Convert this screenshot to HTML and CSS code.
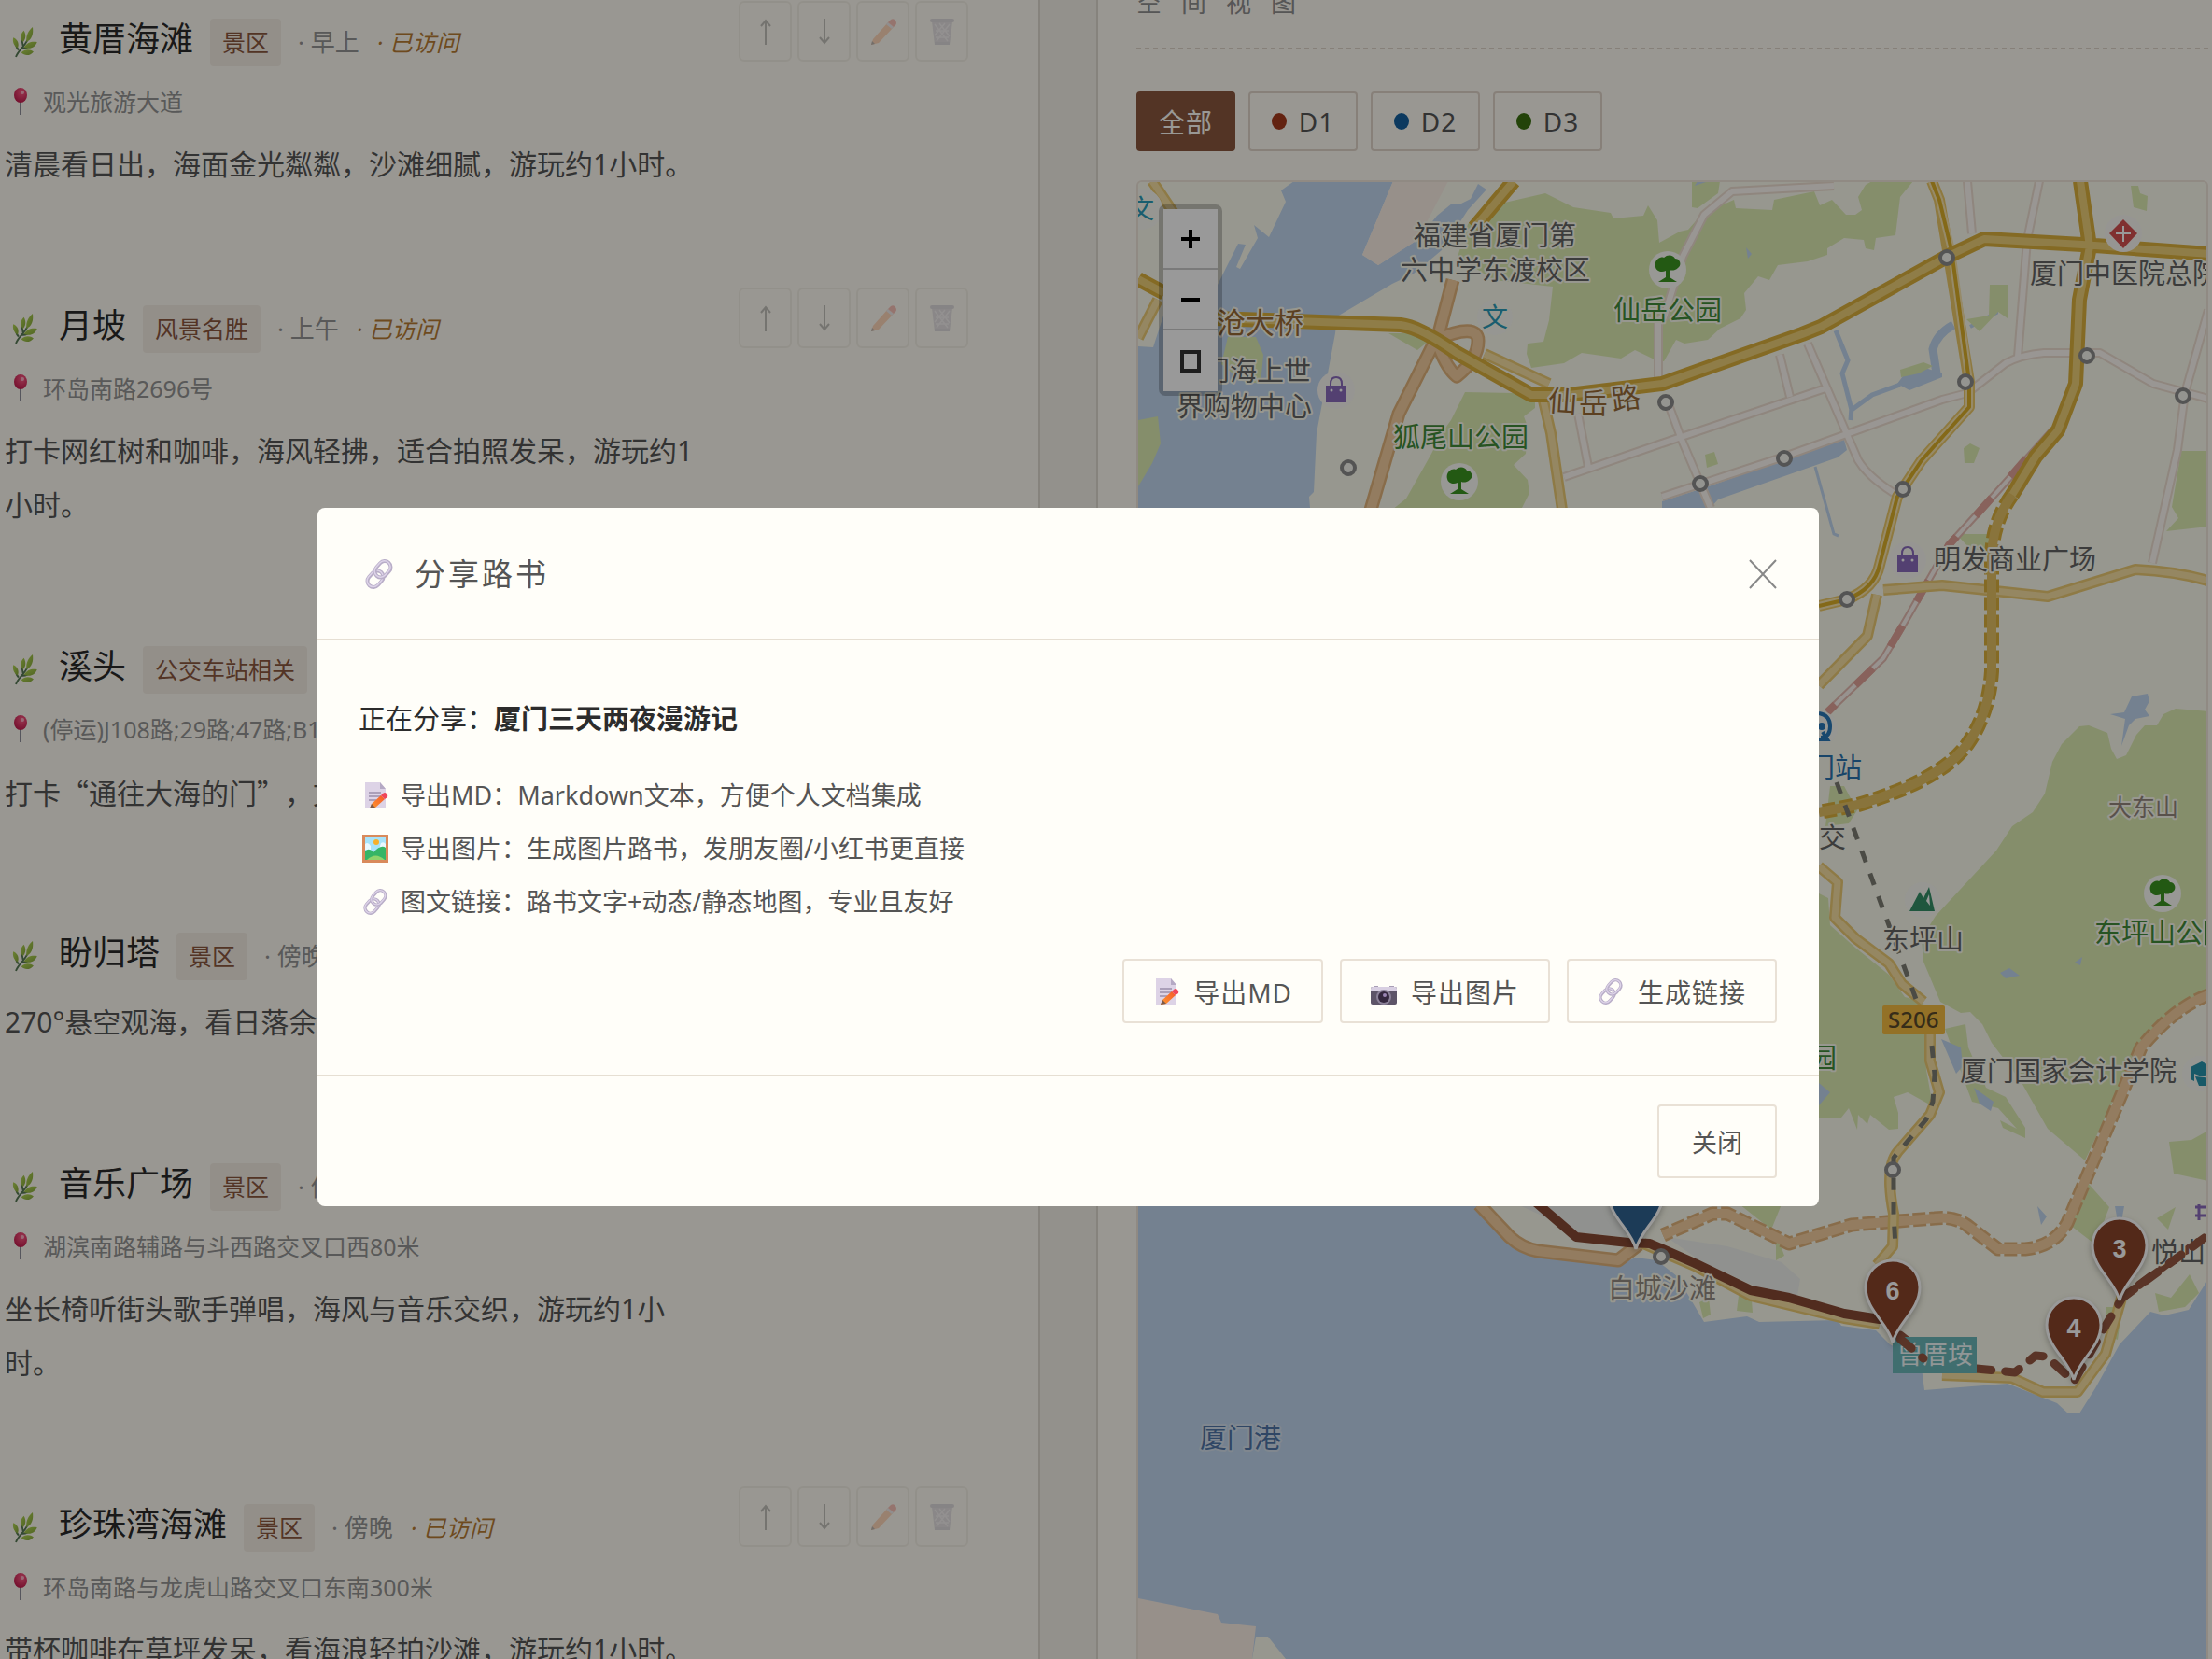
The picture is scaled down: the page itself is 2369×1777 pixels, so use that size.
FILE: index.html
```html
<!DOCTYPE html>
<html lang="zh-CN">
<head>
<meta charset="utf-8">
<title>厦门三天两夜漫游记</title>
<link rel="stylesheet" href="styles.css">
</head>
<body>
<svg class="sprite" aria-hidden="true">
  <defs>
    <linearGradient id="g-pencil" x1="0" y1="1" x2="1" y2="0"><stop offset="0" stop-color="#ff9a2e"/><stop offset="1" stop-color="#f4582c"/></linearGradient>
    <linearGradient id="g-leaf" x1="0" y1="0" x2="1" y2="1"><stop offset="0" stop-color="#b5d955"/><stop offset="1" stop-color="#86a83c"/></linearGradient>
    <radialGradient id="g-ball" cx=".6" cy=".3" r=".7"><stop offset="0" stop-color="#ff5c86"/><stop offset="1" stop-color="#c41c4e"/></radialGradient>
  </defs>
  <symbol id="leaf" viewBox="0 0 28 36">
    <path d="M4 35C6 28 13 24 17 16M7 27Q4 24 4 19M12 22Q11 18 11 14M10 25Q16 26 22 21" fill="none" stroke="#587a55" stroke-width="2"/>
    <g fill="url(#g-leaf)"><path d="M16 18C15 11 18 5 23 1C24 9 22 15 16 18Z"/><path d="M12 18C8 14 9 9 13 5C16 10 15 15 12 18Z"/><path d="M6 25C1 22 0 17 1 13C6 15 8 20 6 25Z"/><path d="M13 24C17 18 22 17 28 18C26 24 20 27 13 24Z"/><path d="M10 30C14 26 20 26 24 29C20 34 14 34 10 30Z"/></g>
  </symbol>
  <symbol id="pushpin" viewBox="0 0 16 30"><path d="M8 13V29" stroke="#8f8f9c" stroke-width="2"/><ellipse cx="8" cy="8" rx="7" ry="8" fill="url(#g-ball)"/><ellipse cx="10" cy="5" rx="2" ry="2" fill="#ffb0c4"/></symbol>
  <symbol id="link" viewBox="0 0 32 32">
    <g transform="rotate(-48 16 16)" fill="none"><rect x="0" y="10" width="19" height="13" rx="6.5" stroke="#b9aec8" stroke-width="4"/><rect x="0" y="9.5" width="19" height="13" rx="6.5" stroke="#ddd3e8" stroke-width="1.5"/><rect x="13" y="9" width="19" height="13" rx="6.5" stroke="#b9aec8" stroke-width="4"/><rect x="13" y="8.5" width="19" height="13" rx="6.5" stroke="#ddd3e8" stroke-width="1.5"/></g>
  </symbol>
  <symbol id="memo" viewBox="0 0 28 30"><path d="M3 1H19L25 8V29H3Z" fill="#ddd3e6"/><path d="M19 1V8H25Z" fill="#b5a9c4"/><path d="M7 12H20M7 16H20M7 20H15" stroke="#9b8fab" stroke-width="1.5"/><path d="M10 24L20 15L24 19L14 28L8 29Z" fill="url(#g-pencil)"/><path d="M20 15L22 13Q24 11 26 13T27 17L24 19Z" fill="#f0465a"/><path d="M8 29L10 24L14 28Z" fill="#7b5a4a"/></symbol>
  <symbol id="picture" viewBox="0 0 28 30"><path d="M0 0H28V30H0Z" fill="#d98a5b"/><path d="M3 3H25V27H3Z" fill="#a7e3fa"/><circle cx="15" cy="8" r="3" fill="#f6b02c"/><path d="M3 10Q6 7 9 12L9 16H3ZM20 9Q23 7 25 10V15H18Z" fill="#e9f8ff"/><path d="M3 18Q7 13 12 19Q20 10 25 14V27H3Z" fill="#35b566"/><path d="M5 27Q14 18 24 27Z" fill="#8ed36b"/></symbol>
  <symbol id="camera" viewBox="0 0 28 30"><path d="M3 9H8V12H3ZM20 9H25V12H20Z" fill="#a89db5"/><rect y="10" width="28" height="19" rx="2" fill="#5d5468"/><path d="M0 14V12Q0 10 2 10H26Q28 10 28 12V14Z" fill="#d8cfe2"/><ellipse cx="14" cy="21" rx="8" ry="8" fill="#8c8299"/><ellipse cx="14" cy="21" rx="6" ry="6" fill="#35283f"/><circle cx="15" cy="19" r="2" fill="#9b86b4"/></symbol>
  <symbol id="pencil" viewBox="0 0 28 30"><path d="M3 23L19 5L25 10L9 27L1 29Z" fill="#ff9352"/><path d="M17 7L19 5L25 10L23 12Z" fill="#d9d3e4"/><path d="M19 5L22 2Q25 0 27 3T27 8L25 10Z" fill="#f0584e"/><path d="M1 29L2 25L5 28Z" fill="#4a3a3a"/></symbol>
  <symbol id="bin" viewBox="0 0 28 30"><path d="M3 4H25L22 29H6Z" fill="#b8b3c6"/><path d="M6 7L20 25M11 6L22 20M22 7L8 25M17 6L6 19M7 14H21M7 21H21" stroke="#e3dfee" stroke-width="1.5"/><rect x="1" y="1" width="26" height="4" rx="2" fill="#a8a3b8"/><path d="M6 26H22V29H6Z" fill="#a8a3b8"/></symbol>
  <symbol id="up" viewBox="0 0 28 30"><path d="M14 29V3M9 9L14 3L19 9" fill="none" stroke="#555" stroke-width="2"/></symbol>
  <symbol id="down" viewBox="0 0 28 30"><path d="M14 1V27M9 21L14 27L19 21" fill="none" stroke="#555" stroke-width="2"/></symbol>
</svg>

<div class="page">
  <main class="plan">
    <article class="stop">
      <div class="stop-main">
        <header class="stop-head"><svg class="leaf"><use href="#leaf"/></svg><h3>黄厝海滩</h3><span class="tag">景区</span><span class="time">· 早上</span><em class="visited">· 已访问</em></header>
        <p class="address"><svg><use href="#pushpin"/></svg>观光旅游大道</p>
        <p class="note">清晨看日出，海面金光粼粼，沙滩细腻，游玩约1小时。</p>
      </div>
      <div class="actions"><button aria-label="上移"><svg><use href="#up"/></svg></button><button aria-label="下移"><svg><use href="#down"/></svg></button><button aria-label="编辑"><svg><use href="#pencil"/></svg></button><button aria-label="删除"><svg><use href="#bin"/></svg></button></div>
    </article>
    <article class="stop">
      <div class="stop-main">
        <header class="stop-head"><svg class="leaf"><use href="#leaf"/></svg><h3>月坡</h3><span class="tag">风景名胜</span><span class="time">· 上午</span><em class="visited">· 已访问</em></header>
        <p class="address"><svg><use href="#pushpin"/></svg>环岛南路2696号</p>
        <p class="note">打卡网红树和咖啡，海风轻拂，适合拍照发呆，游玩约1小时。</p>
      </div>
      <div class="actions"><button aria-label="上移"><svg><use href="#up"/></svg></button><button aria-label="下移"><svg><use href="#down"/></svg></button><button aria-label="编辑"><svg><use href="#pencil"/></svg></button><button aria-label="删除"><svg><use href="#bin"/></svg></button></div>
    </article>
    <article class="stop">
      <div class="stop-main">
        <header class="stop-head"><svg class="leaf"><use href="#leaf"/></svg><h3>溪头</h3><span class="tag">公交车站相关</span></header>
        <p class="address"><svg><use href="#pushpin"/></svg>(停运)J108路;29路;47路;B1</p>
        <p class="note quoted">打卡“通往大海的门”，文</p>
      </div>
    </article>
    <article class="stop">
      <div class="stop-main">
        <header class="stop-head"><svg class="leaf"><use href="#leaf"/></svg><h3>盼归塔</h3><span class="tag">景区</span><span class="time">· 傍晚</span></header>
        <p class="note">270°悬空观海，看日落余</p>
      </div>
    </article>
    <article class="stop">
      <div class="stop-main">
        <header class="stop-head"><svg class="leaf"><use href="#leaf"/></svg><h3>音乐广场</h3><span class="tag">景区</span><span class="time">· 傍晚</span></header>
        <p class="address"><svg><use href="#pushpin"/></svg>湖滨南路辅路与斗西路交叉口西80米</p>
        <p class="note">坐长椅听街头歌手弹唱，海风与音乐交织，游玩约1小时。</p>
      </div>
    </article>
    <article class="stop">
      <div class="stop-main">
        <header class="stop-head"><svg class="leaf"><use href="#leaf"/></svg><h3>珍珠湾海滩</h3><span class="tag">景区</span><span class="time">· 傍晚</span><em class="visited">· 已访问</em></header>
        <p class="address"><svg><use href="#pushpin"/></svg>环岛南路与龙虎山路交叉口东南300米</p>
        <p class="note">带杯咖啡在草坪发呆，看海浪轻拍沙滩，游玩约1小时。</p>
      </div>
      <div class="actions"><button aria-label="上移"><svg><use href="#up"/></svg></button><button aria-label="下移"><svg><use href="#down"/></svg></button><button aria-label="编辑"><svg><use href="#pencil"/></svg></button><button aria-label="删除"><svg><use href="#bin"/></svg></button></div>
    </article>
  </main>
  <div class="gutter"></div>
  <aside class="space">
    <h2>空间视图</h2>
    <div class="rule"></div>
    <div class="days">
      <button class="all">全部</button>
      <button><i class="dot d1"></i>D1</button>
      <button><i class="dot d2"></i>D2</button>
      <button><i class="dot d3"></i>D3</button>
    </div>
    <div class="map">
      <svg class="canvas" viewBox="1219 195 1146 1582" preserveAspectRatio="xMinYMin slice">
        <defs>
          <g id="tree"><circle r="20" fill="#fdfdf8"/><path d="M-13-3C-15-9-9-15-4-13C0-17 6-16 8-12C14-12 15-4 11-2C8 1 4 1 2 0V8L10 13H-10L-2 8V1C-6 3-12 2-13-3Z" fill="#3b9420"/></g>
          <g id="bag"><circle r="20" fill="#fbf9f4"/><path d="M-11-5H11V13H-11Z" fill="#8b6bbd"/><path d="M-6-3V-7Q-6-14 0-14T6-7V-3" fill="none" stroke="#8b6bbd" stroke-width="2"/><circle cx="-5" cy="0" r="1.5" fill="#fff"/><circle cx="5" cy="0" r="1.5" fill="#fff"/></g>
          <path id="pin" d="M0 0C-5-21-29-35-29-59A29 29 0 0 1 29-59C29-35 5-21 0 0Z" stroke="#fff" stroke-width="3"/>
          <g id="stn"><circle r="7" fill="#f7f7f0" stroke="#8c8c8c" stroke-width="4"/></g>
        </defs>
        <path d="M1219 195H2365V1777H1219Z" fill="#fcfcee"/>

        <g class="water">
          <path d="M1386 194L1372 204L1377 216L1359 254L1343 241L1347 255L1328 288L1324 286L1334 262L1326 261L1303 307L1280 325L1247 335L1235 372L1219 371V1300H1590L1403 544L1402 532L1407 527L1410 464L1430 357L1432 339L1464 320L1491 304L1514 293L1544 268L1572 225L1592 203L1583 197L1575 213L1565 218L1555 218L1539 231L1518 257L1476 284L1459 273L1492 194Z"/>
          <path d="M1219 1290H1580L1606 1323L1640 1340L1737 1353L1752 1347L1774 1350L1796 1367L1825 1416L1871 1410L1884 1416L1968 1414L1972 1420L2009 1425L2024 1440L2057 1457L2061 1489L2150 1482L2188 1497L2203 1503L2215 1514H2227L2244 1487L2270 1440L2303 1405L2318 1409L2344 1403L2365 1370V1777H1219Z"/>
          <path d="M1780 546V537L1830 521L1920 489L1975 471L1978 482L1968 490L1840 535L1830 546Z"/>
          <path d="M2032 411L2043 396L2065 395L2080 400V404L2045 418Z"/>
          <path d="M2260 765L2275 763L2283 746L2300 743L2302 751L2297 760L2302 767L2287 770L2280 777L2272 799L2276 770Z"/>
        </g>
        <g fill="none" stroke="#c1d7f0"><path d="M2074 400L2070 374Q2074 358 2092 348" stroke-width="9"/><path d="M1966 354L1979 386L1973 400L1983 439L2005 423L2035 412M1983 436L1982 450" stroke-width="5"/><path d="M1944 500L1964 572L1969 574" stroke-width="3"/><path d="M2110 350L2138 335V312" stroke-width="4"/></g>
        <path d="M1492 194H1551L1518 257L1476 284L1459 273Z" fill="#fcf0e7"/>
        <path d="M1219 1712L1304 1729L1308 1738L1345 1742L1341 1777H1219Z" fill="#fcf0e7"/>
        <path d="M1345 1753H1358L1377 1777H1341Z" fill="#fcfcee"/>
        <path d="M1625 1290H1760L1740 1325L1690 1320ZM1785 1325L1850 1335L1908 1352L1928 1370L1925 1388L1880 1378L1820 1350Z" fill="#f0f2ee"/>

        <g class="park">
          <path d="M1594 221L1655 207L1685 222L1725 228L1728 234L1760 231L1765 220L1775 236L1777 260L1799 248L1808 246L1823 229L1857 214L1859 223L1898 225L1900 214L1943 205L1949 220L1962 214L1977 230H1987L1994 225L1990 211L1998 198L2005 194H2049L2035 211L2030 252L2009 255L2007 268L1998 266L1996 257L1975 255L1957 266V273L1936 280L1904 284L1895 300L1883 296L1868 314L1870 332L1864 341L1842 352L1829 364L1804 368L1795 364L1782 387L1774 386L1751 375L1736 384L1694 378L1675 389L1640 394L1635 379L1636 368L1653 366L1659 343L1663 307L1600 300L1561 275L1572 240Z"/>
          <path d="M1812 194H1842L1840 207L1818 223L1812 222Z"/>
          <path d="M1569 420L1621 421L1644 430V437L1632 446L1636 457L1634 486L1621 498L1636 514L1638 528L1629 546H1491L1506 534L1533 486L1544 464L1554 450Z"/>
          <path d="M1315 361H1345L1353 380L1350 411L1330 408L1308 390ZM1219 450L1240 446L1243 475L1234 496L1219 521ZM1487 357H1540L1518 375ZM2282 199H2290L2292 207L2300 210L2299 226L2285 222Z"/>
          <path d="M2336 483H2365V564L2320 569L2333 555L2326 543ZM1826 487L1836 484L1840 497L1828 501ZM2131 305H2150V341L2140 334L2120 355L2106 342L2130 338ZM2103 480L2110 475L2120 480L2114 496H2104ZM2035 396L2060 388L2070 392L2055 400L2036 404ZM2095 572H2130V590L2110 588Z"/>
          <path d="M2365 762L2330 759L2317 765L2310 777H2297L2288 787L2277 809L2267 813L2261 802L2257 785L2237 777L2227 778L2208 797L2198 816L2190 850L2177 870L2155 885L2138 911L2073 981L2058 1005L2060 1030L2078 1073L2100 1085L2110 1084L2123 1097L2133 1117L2163 1156L2193 1209L2233 1243L2260 1185L2293 1122L2333 1078L2365 1061Z"/>
          <path d="M1948 957L1958 962L1960 991L1987 1015L2023 1044L2040 1068L2060 1073L2063 1146L2070 1185L2043 1170L2028 1175L2033 1192V1209L2023 1210L2003 1194L2000 1204L1990 1194L1989 1210L1980 1187L1972 1197H1940V957ZM1960 842L1975 842L1989 868L1980 882L1955 885Z"/>
          <path d="M2083 1102L2105 1097L2108 1122L2127 1165L2148 1175L2169 1208V1219L2145 1208L2142 1200L2160 1209L2140 1187L2112 1180Z"/>
          <path d="M2323 1223L2347 1221L2365 1211V1265L2328 1257ZM2236 1267L2259 1293L2244 1333L2218 1313ZM1863 1290H1908L1897 1317ZM1863 1380H1875L1877 1406L1860 1404ZM1820 1395L1830 1390L1832 1408L1824 1412ZM1902 1320L1911 1345L1902 1350ZM2310 1305L2330 1293L2322 1317ZM2308 1385L2325 1390L2345 1365L2355 1385L2340 1400L2312 1405ZM2255 1400H2273L2268 1435L2255 1430Z"/>
        </g>
        <g class="water"><path d="M2079 1113L2100 1122L2102 1142L2095 1150ZM2114 1165L2135 1180L2132 1190L2120 1182ZM2142 1042L2152 1037L2163 1045L2148 1048ZM2222 1031L2230 1025L2228 1034ZM1948 1160L1960 1170L1948 1184ZM1830 194H1818L1815 199ZM1870 265L1876 272L1872 277ZM2182 1292L2192 1303L2186 1312ZM2265 1292H2275L2270 1320Z"/></g>

        <!-- side streets: casing, then surface -->
        <g fill="none" stroke-linejoin="round">
          <g stroke="#efdfd2" stroke-width="10"><path d="M1964 199L1855 205L1825 230L1802 275L1782 340L1776 343V410M1788 436L1801 471L1832 544M1780 475L1955 416M1906 380L1917 425M1936 368L1990 493Q2000 510 2028 528M1690 443L1701 500M1675 511L1800 468M1780 532L1911 489L2080 428L2107 421L2148 389Q2165 380 2189 378H2249L2306 411L2365 427M2107 194L2112 250M2184 194L2171 257L2161 382M2365 332L2340 421L2332 482L2305 603"/></g>
          <g stroke="#fffaf5" stroke-width="6"><path d="M1964 199L1855 205L1825 230L1802 275L1782 340L1776 343V410M1788 436L1801 471L1832 544M1780 475L1955 416M1906 380L1917 425M1936 368L1990 493Q2000 510 2028 528M1690 443L1701 500M1675 511L1800 468M1780 532L1911 489L2080 428L2107 421L2148 389Q2165 380 2189 378H2249L2306 411L2365 427M2107 194L2112 250M2184 194L2171 257L2161 382M2365 332L2340 421L2332 482L2305 603"/></g>
          <path d="M2198 461L2127 540L2087 584L2043 661L2017 705L1957 763" stroke="#e6bdb2" stroke-width="8"/>
          <path d="M2198 461L2127 540L2087 584L2043 661L2017 705L1957 763" stroke="#fcf4ee" stroke-width="4"/>
          <path d="M2170 491L2127 540L2087 584L2043 661L2017 705L1957 763" stroke="#e3a499" stroke-width="8" stroke-dasharray="26 30"/>

          <!-- orange highways -->
          <g stroke="#e3b57c" stroke-width="15"><path d="M1556 300L1541 357L1498 443L1468 546M1537 364Q1583 345 1583 365T1560 403Q1550 395 1541 372"/><path d="M1584 1290L1617 1325Q1630 1337 1647 1340L1733 1350L1755 1333"/><path d="M2365 1066Q2330 1078 2293 1122L2273 1170L2214 1310Q2200 1335 2169 1338H2140L2110 1315Q2095 1302 2072 1305L1983 1312L1916 1332L1850 1300H1834L1781 1323" stroke-dasharray="14 4"/></g>
          <g stroke="#f5cfa0" stroke-width="10"><path d="M1556 300L1541 357L1498 443L1468 546M1537 364Q1583 345 1583 365T1560 403Q1550 395 1541 372"/><path d="M1584 1290L1617 1325Q1630 1337 1647 1340L1733 1350L1755 1333"/><path d="M2365 1066Q2330 1078 2293 1122L2273 1170L2214 1310Q2200 1335 2169 1338H2140L2110 1315Q2095 1302 2072 1305L1983 1312L1916 1332L1850 1300H1834L1781 1323"/></g>

          <!-- pale yellow roads -->
          <g stroke="#edcb74" stroke-width="12"><path d="M1590 379L1659 411M1652 425L1661 464L1673 546M1219 362L1240 321M1234 194L1257 228M2017 632L2080 627L2193 639L2287 610Q2330 612 2365 622M2010 637L2000 681L1948 734M1948 928L1968 945L1965 983L1987 1005L2023 1032L2037 1054L2060 1073M2067 1107V1136L2077 1170L2067 1194L2033 1233Q2018 1250 2028 1300L2027 1335L2010 1355M1760 1332L1815 1356L1875 1388L1975 1412L2013 1418M2080 1473L2155 1476L2188 1491H2225L2255 1450L2275 1380"/></g>
          <g stroke="#f8e1a4" stroke-width="7"><path d="M1590 379L1659 411M1652 425L1661 464L1673 546M1219 362L1240 321M1234 194L1257 228M2017 632L2080 627L2193 639L2287 610Q2330 612 2365 622M2010 637L2000 681L1948 734M1948 928L1968 945L1965 983L1987 1005L2023 1032L2037 1054L2060 1073M2067 1107V1136L2077 1170L2067 1194L2033 1233Q2018 1250 2028 1300L2027 1335L2010 1355M1760 1332L1815 1356L1875 1388L1975 1412L2013 1418M2080 1473L2155 1476L2188 1491H2225L2255 1450L2275 1380"/></g>

          <!-- main roads -->
          <path d="M2069 194L2077 214L2086 268L2109 409V436L2058 493L2032 532L2013 605Q2008 630 1978 642L1948 649" stroke="#edca6a" stroke-width="12"/>
          <path d="M2069 194L2077 214L2090 268L2109 409V436L2058 493L2032 532L2013 605Q2008 630 1978 642L1948 649" stroke="#fae7b0" stroke-width="8"/>
          <path d="M2069 194L2077 214L2090 268L2109 409V436L2058 493L2032 532L2013 605Q2008 630 1978 642L1948 649" stroke="#dcb028" stroke-width="4"/>
          <g stroke="#dcb13c" stroke-width="16"><path d="M1300 341L1500 348Q1520 350 1560 378L1640 423H1680L1780 411L1930 358L1950 350L2085 275L2125 256L2230 262L2365 272M1621 194L1579 244M1219 299L1247 314M2228 194L2238 264L2227 321L2223 411L2204 461L2180 489L2155 530"/><path d="M2155 530Q2133 560 2133 600V719Q2130 765 2107 797Q2080 835 1990 862L1948 870" stroke-dasharray="14 5"/></g>
          <g stroke="#efd078" stroke-width="8"><path d="M1300 341L1500 348Q1520 350 1560 378L1640 423H1680L1780 411L1930 358L1950 350L2085 275L2125 256L2230 262L2365 272M1621 194L1579 244M1219 299L1247 314M2228 194L2238 264L2227 321L2223 411L2204 461L2180 489L2155 530"/></g>
          <path d="M2155 530Q2133 560 2133 600V719Q2130 765 2107 797Q2080 835 1990 862L1948 870" stroke="#e5c264" stroke-width="10"/>
          <path d="M1967 838L2053 1073M2069 1120L2072 1151L2070 1180L2063 1199L2028 1240V1300L2030 1335" stroke="#7d7d74" stroke-width="5" stroke-dasharray="13 13"/>

          <!-- planned route -->
          <path d="M1645 1288L1688 1325L1744 1331L1767 1332L1815 1353L1875 1382L1916 1390L1975 1407L2013 1413" stroke="#884a34" stroke-width="10" stroke-linecap="round"/>
          <path d="M2035 1430L2076 1462L2158 1470L2180 1452L2192 1453L2221 1480L2255 1420L2273 1390L2326 1350L2365 1323" stroke="#965842" stroke-width="9" stroke-linecap="round" stroke-dasharray="16 15"/>
        </g>

        <use href="#stn" x="2085" y="276"/><use href="#stn" x="2105" y="409"/><use href="#stn" x="2235" y="381"/><use href="#stn" x="2338" y="424"/><use href="#stn" x="1911" y="491"/><use href="#stn" x="1821" y="518"/><use href="#stn" x="2038" y="524"/><use href="#stn" x="1784" y="431"/><use href="#stn" x="1444" y="501"/><use href="#stn" x="1978" y="642"/><use href="#stn" x="2027" y="1253"/><use href="#stn" x="1779" y="1346"/>

        <use href="#tree" x="1786" y="289"/><use href="#tree" x="1563" y="516"/><use href="#tree" x="2316" y="957"/><use href="#bag" x="1431" y="418"/><use href="#bag" x="2043" y="600"/>
        <circle cx="2274" cy="250" r="20" fill="#fbf9f4"/><path d="M2274 235L2289 250L2274 266L2259 250Z" fill="#d65050"/><path d="M2274 242V259M2266 250H2282" stroke="#fff" stroke-width="2"/>
        <circle cx="2059" cy="964" r="19" fill="#fbfbf4"/><path d="M2045 976L2056 955L2060 962L2066 950L2072 976Z" fill="#359068"/><path d="M2063 965L2066 958L2067 970Z" fill="#fff"/>
        <circle cx="2356" cy="1150" r="19" fill="#fbfbf4"/><path d="M2346 1143L2358 1137L2370 1143V1150L2358 1153L2350 1150V1158L2346 1156ZM2351 1153L2370 1155V1163H2355Z" fill="#2894ae"/>
        <circle cx="1950" cy="780" r="18" fill="#fbfbf4"/><path d="M1948 764Q1960 766 1960 778T1950 790M1940 792H1957L1952 784" fill="none" stroke="#2878b8" stroke-width="4"/><circle cx="1951" cy="778" r="4" fill="#2878b8"/>
        <path d="M2351 1293H2365M2351 1302H2365M2355 1290V1307" stroke="#8b6bbd" stroke-width="3"/>
        <circle cx="1601" cy="340" r="19" fill="#fbfbf4"/><circle cx="1223" cy="224" r="22" fill="#fbfbf4"/>
        <rect x="2016" y="1077" width="67" height="31" rx="2" fill="#f6bd42"/>
        <rect x="2027" y="1432" width="90" height="39" fill="#6cb7b9"/>

        <g class="labels">
          <text class="school" x="1587" y="350">文</text><text class="school" x="1208" y="234">文</text>
          <text x="1514" y="263">福建省厦门第</text><text x="1500" y="300">六中学东渡校区</text>
          <text class="green" x="1728" y="343">仙岳公园</text><text class="green" x="1492" y="479">狐尾山公园</text>
          <text class="road" x="1303" y="357">沧大桥</text>
          <text x="1259" y="408">厦门海上世</text><text x="1260" y="446">界购物中心</text>
          <text class="road" transform="rotate(4 1673 430)" x="1658" y="441">仙</text><text class="road" x="1691" y="443">岳</text><text class="road" transform="rotate(-8 1741 428)" x="1726" y="438">路</text>
          <text x="2174" y="304">厦门中医院总院</text><text x="2071" y="610">明发商业广场</text>
          <text class="blue" x="1907" y="833">厦门站</text><text x="1919" y="908">公交</text>
          <text class="hill" x="2258" y="874">大东山</text><text x="2016" y="1017">东坪山</text>
          <text class="green" x="2243" y="1010">东坪山公园</text><text x="2099" y="1158">厦门国家会计学院</text>
          <text class="green" x="1938" y="1144">园</text><text class="beach" x="1722" y="1391">白城沙滩</text>
          <text class="port" x="1285" y="1551">厦门港</text><text x="2304" y="1352">悦山</text>
          <text class="badge" x="2022" y="1101">S206</text><text class="village" x="2032" y="1461">曾厝垵</text>
        </g>

        <path d="M2035 1434L2060 1455M2273 1390L2365 1323" fill="none" stroke="#965842" stroke-width="9" stroke-linecap="round" stroke-dasharray="16 15"/>
        <g class="pins">
          <use href="#pin" x="1752" y="1338" fill="#306391"/><text x="1752" y="1292">5</text>
          <use href="#pin" x="2270" y="1393" fill="#8a452a"/><text x="2270" y="1347">3</text>
          <use href="#pin" x="2027" y="1438" fill="#8a452a"/><text x="2027" y="1392">6</text>
          <use href="#pin" x="2221" y="1478" fill="#8a452a"/><text x="2221" y="1432">4</text>
        </g>
      </svg>
      <div class="zoom">
        <button aria-label="放大"><svg viewBox="0 0 24 24"><path d="M2 12H22M12 2V22"/></svg></button>
        <button aria-label="缩小"><svg viewBox="0 0 24 24"><path d="M2 12H22"/></svg></button>
        <button aria-label="全屏"><svg viewBox="0 0 24 24"><path class="frame" d="M3 2H21V22H3Z"/></svg></button>
      </div>
    </div>
  </aside>
</div>

<div class="overlay">
  <section class="dialog" role="dialog" aria-labelledby="dialog-title">
    <header class="dialog-head">
      <svg class="title-icon"><use href="#link"/></svg>
      <h1 id="dialog-title">分享路书</h1>
      <button class="close" aria-label="关闭"><svg viewBox="0 0 30 32"><path d="M1 1L29 31M29 1L1 31"/></svg></button>
    </header>
    <div class="dialog-body">
      <p class="intro">正在分享：<strong>厦门三天两夜漫游记</strong></p>
      <ul>
        <li><svg><use href="#memo"/></svg>导出MD：Markdown文本，方便个人文档集成</li>
        <li><svg><use href="#picture"/></svg>导出图片：生成图片路书，发朋友圈/小红书更直接</li>
        <li><svg><use href="#link"/></svg>图文链接：路书文字+动态/静态地图，专业且友好</li>
      </ul>
      <div class="exports">
        <button><svg><use href="#memo"/></svg>导出MD</button>
        <button><svg><use href="#camera"/></svg>导出图片</button>
        <button><svg><use href="#link"/></svg>生成链接</button>
      </div>
    </div>
    <footer class="dialog-foot"><button>关闭</button></footer>
  </section>
</div>
</body>
</html>
```

FILE: styles.css
```css
* { box-sizing: border-box; }

body {
  margin: 0;
  background: #fffcf3;
  color: #555;
  font-family: "Noto Sans", "Noto Sans CJK SC", sans-serif;
}

h1, h2, h3, p, ul { margin: 0; padding: 0; font-weight: 400; }
ul { list-style: none; }
button { margin: 0; padding: 0; font: inherit; color: inherit; background: none; cursor: pointer; }
svg { display: block; flex: none; }
.sprite { position: absolute; width: 0; height: 0; }

.page {
  display: grid;
  grid-template-columns: 1112px 64px minmax(0, 1fr);
  grid-template-rows: minmax(0, 1fr);
  height: 100vh;
  overflow: hidden;
}

/* itinerary */
.plan {
  display: flex;
  flex-direction: column;
  gap: 103px;
  padding: 1px 75px 0 5px;
}
.stop { display: flex; justify-content: space-between; flex: none; }
.stop-main { width: 756px; padding-top: 12px; }
.stop-head { display: flex; align-items: center; height: 58px; white-space: nowrap; }
.leaf { width: 29px; height: 34px; margin: 6px 22px 0 7px; }
.stop-head h3 { font-size: 36px; line-height: 58px; color: #2b2b2b; }
.tag {
  margin: 6px 0 0 18px;
  padding: 0 13px;
  font-size: 25px;
  line-height: 51px;
  color: #8b573e;
  background: #f6eee5;
  border-radius: 4px;
}
.time { margin: 6px 0 0 18px; font-size: 26px; line-height: 51px; color: #949494; }
.visited { margin: 6px 0 0 19px; font-size: 25px; line-height: 51px; color: #b87c35; }
.address {
  display: flex;
  align-items: center;
  margin-top: 16px;
  font-size: 25px;
  line-height: 44px;
  color: #949494;
  white-space: nowrap;
}
.address svg { width: 16px; height: 30px; margin: 0 16px 0 9px; }
.note { margin-top: 16px; font-size: 30px; line-height: 58px; color: #555; }
.quoted { font-family: "Noto Sans CJK SC", sans-serif; text-spacing-trim: space-all; }

.actions { display: flex; gap: 6px; opacity: 0.35; }
.actions button {
  display: grid;
  place-items: center;
  width: 57px;
  height: 65px;
  border: 2px solid #e2dccf;
  border-radius: 6px;
}
.actions svg { width: 28px; height: 30px; }

.gutter { background: #f5f2ea; border: solid #dfdbd0; border-width: 0 2px; }

/* map side */
.space { display: flex; flex-direction: column; padding: 0 4px 0 41px; min-width: 0; }
.space h2 {
  height: 40px;
  margin-top: -17px;
  font-size: 27px;
  line-height: 40px;
  letter-spacing: 21px;
  color: #8f8f8f;
}
.rule {
  flex: none;
  height: 2px;
  margin-top: 28px;
  background: repeating-linear-gradient(90deg, #dfd5ca 0 5px, transparent 5px 9px);
}
.days { display: flex; gap: 14px; margin: 45px 0 31px; }
.days button {
  display: flex;
  align-items: center;
  justify-content: center;
  gap: 13px;
  width: 117px;
  height: 64px;
  font-size: 28px;
  letter-spacing: 1px;
  border: 2px solid #e2d5ca;
  border-radius: 4px;
}
.days .all { width: 106px; color: #fffef9; background: #8b573e; border-color: #8b573e; }
.dot { width: 16px; height: 18px; border-radius: 50%; }
.d1 { background: #a63a1c; }
.d2 { background: #14609f; }
.d3 { background: #3b7010; }

.map {
  position: relative;
  flex: 1;
  min-height: 0;
  margin-bottom: -10px;
  padding-bottom: 8px;
  border: 2px solid #f0e6da;
  border-radius: 6px;
  overflow: hidden;
}
.canvas { width: 100%; height: 100%; }
.water { fill: #c1d7f0; }
.park { fill: #deedb3; }
.labels text {
  font-size: 29px;
  fill: #646464;
  stroke: #fcfcee;
  stroke-width: 4px;
  paint-order: stroke;
  stroke-linejoin: round;
}
.labels .green { fill: #428c3a; }
.labels .road { font-size: 31px; fill: #996c38; }
.labels .blue { fill: #2a74b0; }
.labels .school { font-size: 28px; fill: #2c9cba; }
.labels .hill { font-size: 25px; fill: #95887e; }
.labels .beach { fill: #948c84; }
.labels .port { fill: #4f76a8; stroke: #d5e2ef; }
.labels .badge { font-size: 24px; font-weight: 500; fill: #5a4a2a; stroke: none; }
.labels .village { font-size: 27px; fill: #f2fbfb; stroke: none; }
.pins text {
  font-family: "Liberation Sans", sans-serif;
  font-size: 27px;
  font-weight: 700;
  fill: #fff;
  text-anchor: middle;
}
.pins use { filter: drop-shadow(0 3px 3px rgb(0 0 0 / 0.25)); }

.zoom {
  position: absolute;
  top: 24px;
  left: 22px;
  display: grid;
  border: 5px solid rgb(0 0 0 / 0.22);
  border-radius: 7px;
  background-clip: padding-box;
}
.zoom button {
  display: grid;
  place-items: center;
  width: 58px;
  height: 65px;
  background: #fff;
  border: 0;
  border-bottom: 2px solid #ccc;
}
.zoom button:last-child { border-bottom: 0; }
.zoom svg { width: 24px; height: 24px; fill: none; stroke: #000; stroke-width: 4; }
.zoom .frame { stroke: #333; }

/* share dialog */
.overlay {
  position: fixed;
  inset: 0;
  padding: 544px 421px 0 340px;
  background: rgb(0 0 0 / 0.4);
}
.dialog { background: #fffef9; border-radius: 8px; }
.dialog-head {
  display: flex;
  align-items: center;
  height: 142px;
  padding: 2px 45px 0 50px;
  border-bottom: 2px solid #e6dfd3;
}
.title-icon { width: 32px; height: 34px; }
.dialog-head h1 { margin-left: 22px; font-size: 33px; line-height: 48px; letter-spacing: 3px; }
.close { margin-left: auto; border: 0; }
.close svg { width: 30px; height: 32px; fill: none; stroke: #888; stroke-width: 2; }
.dialog-body { padding: 55px 45px 55px 44px; }
.intro { font-size: 29px; line-height: 57px; color: #2c2c2c; }
.dialog-body ul { margin: 25px 0 33px; font-size: 27px; line-height: 57px; }
.dialog-body li { display: flex; align-items: center; }
.dialog-body li svg { width: 28px; height: 30px; margin: 0 13px 0 4px; }
.exports { display: flex; justify-content: flex-end; gap: 18px; }
.exports button {
  display: flex;
  align-items: center;
  gap: 15px;
  height: 69px;
  padding: 0 31px;
  font-size: 28px;
  letter-spacing: 1px;
  border: 2px solid #e9e1d6;
  border-radius: 4px;
}
.exports svg { width: 28px; height: 30px; }
.dialog-foot {
  display: flex;
  justify-content: flex-end;
  padding: 30px 45px 30px;
  border-top: 2px solid #e6dfd3;
}
.dialog-foot button {
  width: 128px;
  height: 79px;
  font-size: 27px;
  border: 2px solid #e9e1d6;
  border-radius: 4px;
}
```
